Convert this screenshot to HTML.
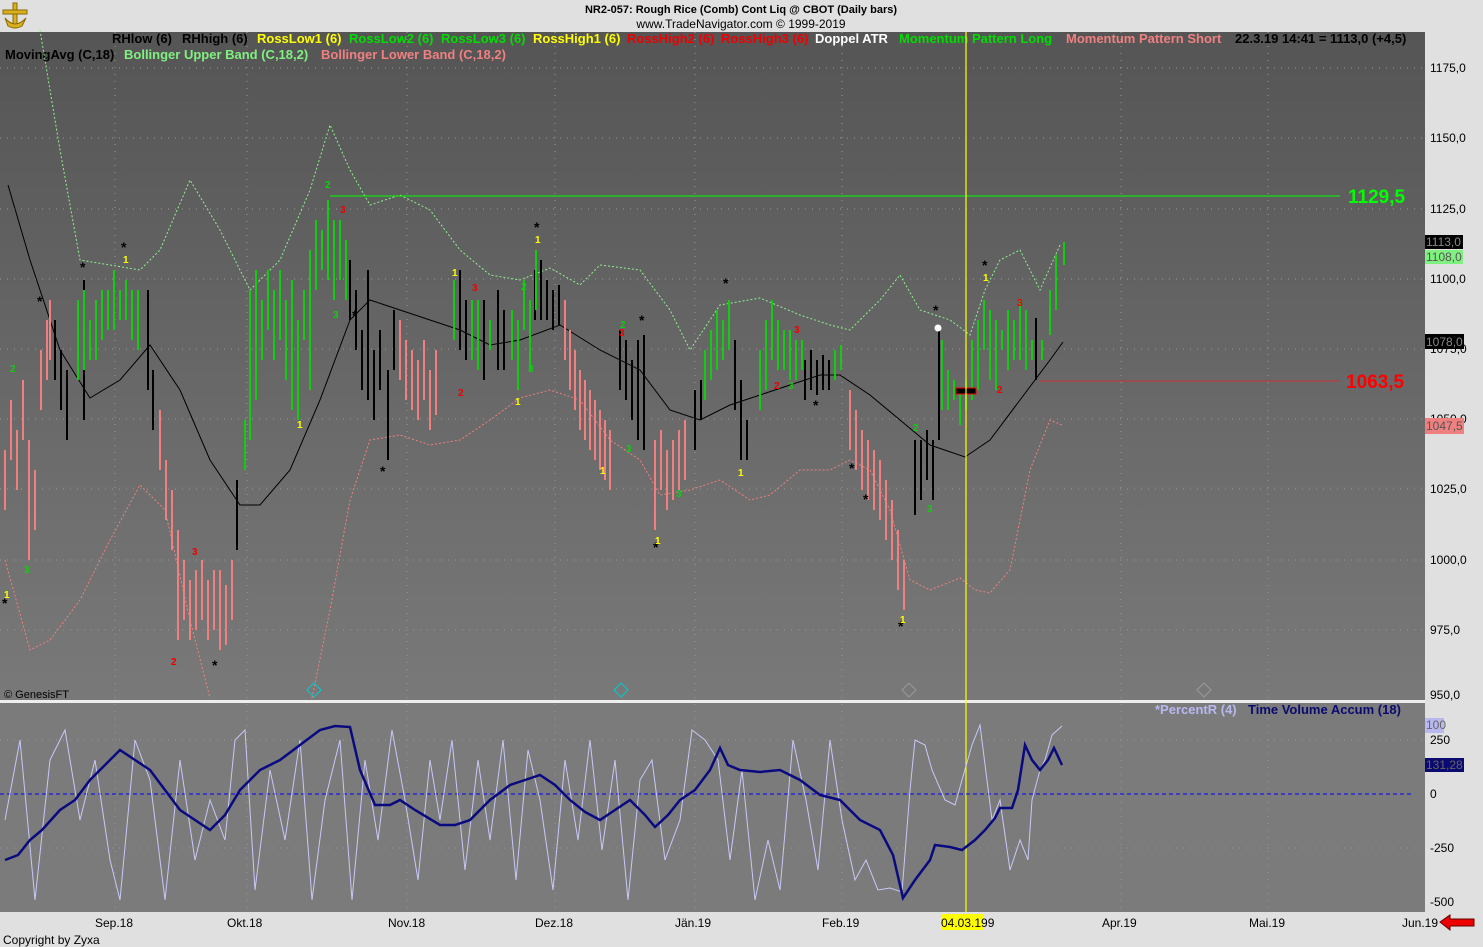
<!DOCTYPE html>
<html><head><meta charset="utf-8"><style>
body{margin:0;width:1483px;height:947px;overflow:hidden;background:#e0e0e0;font-family:"Liberation Sans",sans-serif}
svg{position:absolute;left:0;top:0}
text{font-family:"Liberation Sans",sans-serif}
</style></head><body>
<svg width="1483" height="947" viewBox="0 0 1483 947">
<defs><linearGradient id="g" x1="0" y1="0" x2="0" y2="1"><stop offset="0" stop-color="#555"/><stop offset="1" stop-color="#797979"/></linearGradient></defs>
<rect x="0" y="0" width="1483" height="947" fill="#e0e0e0"/>
<rect x="0" y="32" width="1425" height="668" fill="url(#g)"/>
<rect x="0" y="703" width="1425" height="209" fill="#7b7b7b"/>
<rect x="0" y="700" width="1425" height="3" fill="#eee"/>
<!-- grid -->
<g stroke="#999" stroke-dasharray="1,6" stroke-width="1">
<path d="M0 68H1425M0 138H1425M0 209H1425M0 279H1425M0 349H1425M0 419H1425M0 489H1425M0 560H1425M0 630H1425M0 740H1425M0 848H1425"/>
<path d="M115 32V912M247 32V912M407 32V912M555 32V912M695 32V912M842 32V912M1121 32V912M1268 32V912"/>
</g>
<!-- logo -->
<g fill="#d8b020" stroke="#8a6a00" stroke-width="1"><rect x="13" y="3" width="4" height="24"/><rect x="3" y="10" width="24" height="4"/><path d="M5 18Q15 30 26 18L22 26Q15 30 8 26Z"/></g>
<text x="741" y="13" font-size="11" font-weight="bold" text-anchor="middle">NR2-057:  Rough Rice (Comb) Cont Liq @ CBOT  (Daily bars)</text>
<text x="741" y="28" font-size="12" text-anchor="middle">www.TradeNavigator.com © 1999-2019</text>
<g font-size="13" font-weight="bold">
<text x="112" y="43" fill="#000">RHlow (6)</text><text x="182" y="43" fill="#000">RHhigh (6)</text>
<text x="257" y="43" fill="#ff0">RossLow1 (6)</text><text x="349" y="43" fill="#0d0">RossLow2 (6)</text>
<text x="441" y="43" fill="#0d0">RossLow3 (6)</text><text x="533" y="43" fill="#ff0">RossHigh1 (6)</text>
<text x="627" y="43" fill="#e00">RossHigh2 (6)</text><text x="721" y="43" fill="#e00">RossHigh3 (6)</text>
<text x="815" y="43" fill="#fff">Doppel ATR</text><text x="899" y="43" fill="#0d0">Momentum Pattern Long</text>
<text x="1066" y="43" fill="#f08080">Momentum Pattern Short</text><text x="1235" y="43" fill="#000">22.3.19 14:41 = 1113,0 (+4,5)</text>
<text x="5" y="59" fill="#000">MovingAvg (C,18)</text><text x="124" y="59" fill="#80f080">Bollinger Upper Band (C,18,2)</text>
<text x="321" y="59" fill="#f08080">Bollinger Lower Band (C,18,2)</text>
</g>
<!-- bands -->
<polyline fill="none" stroke="#90f090" stroke-dasharray="2,2" points="40,30 60,150 80,260 110,265 140,270 160,250 190,180 220,230 250,290 280,260 310,190 330,125 350,170 370,205 400,195 430,210 460,250 490,275 520,280 550,268 580,285 600,265 640,270 670,310 690,350 720,305 760,298 800,315 830,325 850,330 880,300 900,275 920,310 950,320 970,335 985,290 1000,260 1020,250 1040,290 1060,245"/>
<polyline fill="none" stroke="#f08080" stroke-dasharray="2,2" points="5,560 30,650 50,640 80,600 110,540 140,485 165,510 190,620 210,698"/>
<polyline fill="none" stroke="#f08080" stroke-dasharray="2,2" points="312,698 330,610 350,500 370,440 400,435 430,445 460,440 490,420 520,398 550,390 580,400 610,440 640,460 660,495 690,490 720,480 750,500 770,495 800,470 830,470 850,460 870,470 890,510 910,580 930,590 960,578 975,590 990,593 1010,570 1030,470 1050,420 1062,425"/>
<polyline fill="none" stroke="#000" points="8,185 30,260 60,350 90,398 120,380 150,345 180,390 210,460 240,505 260,505 290,470 320,400 350,320 370,300 400,310 430,320 460,330 490,345 520,340 560,325 600,350 640,370 670,410 700,420 730,405 760,395 790,385 820,375 840,375 870,395 900,420 930,445 965,457 990,440 1020,400 1050,360 1063,342"/>
<path d="M330 196H1340" stroke="#0f0"/><path d="M1040 381H1340" stroke="#c33"/>
<text x="1348" y="203" font-size="19" font-weight="bold" fill="#0f0">1129,5</text>
<text x="1346" y="388" font-size="19" font-weight="bold" fill="#f00">1063,5</text>
<!-- bars -->
<g stroke-width="2" fill="none">
<path stroke="#f08080" d="M5 450V510M11 400V460M17 430V490M23 380V440M29 440V560M35 470V530M41 350V410M47 320V380M50 300V360M160 410V470M166 460V520M172 490V550M178 530V640M184 560V620M190 580V640M196 570V630M202 560V620M208 580V640M214 570V630M220 570V650M226 585V645M232 560V620M400 320V380M406 340V400M412 350V410M418 360V420M424 340V400M430 370V430M436 350V415M565 300V360M570 330V390M575 350V410M580 370V430M585 380V440M590 390V450M595 400V460M600 410V470M605 420V480M610 430V490M655 440V530M661 430V490M667 450V510M673 440V500M679 430V490M685 420V480M850 390V450M856 410V470M862 430V490M868 440V500M874 450V510M880 460V520M886 480V540M892 500V560M898 530V590M904 560V610"/>
<path stroke="#000" d="M55 320V380M61 350V410M67 370V440M84 280V420M148 290V390M153 370V430M237 480V550M350 260V320M356 290V350M362 330V390M368 270V400M374 350V420M380 330V390M388 370V460M394 310V370M460 270V350M466 300V360M484 300V380M498 290V370M504 310V370M535 270V320M541 260V320M547 280V320M553 290V330M559 285V325M620 330V390M626 340V400M632 360V420M638 340V440M644 335V450M695 390V450M701 380V420M735 340V410M741 380V460M747 420V460M805 360V400M811 350V390M817 360V395M823 355V390M829 360V390M915 440V515M921 440V500M927 430V480M933 440V500M939 330V440M1036 318V380"/>
<path stroke="#1c1" d="M78 300V380M84 290V370M90 320V360M96 300V360M102 290V340M108 290V330M114 270V330M120 290V320M126 280V320M132 290V340M138 290V350M245 420V470M250 290V440M256 270V400M262 300V360M268 270V330M274 290V360M280 270V340M286 300V380M292 280V410M298 320V420M304 290V340M310 250V390M316 220V290M322 230V270M328 200V280M334 220V300M340 220V280M346 240V300M454 280V340M472 300V360M478 300V370M490 320V350M512 310V360M518 320V390M524 280V330M530 300V370M536 250V310M705 350V400M711 330V380M717 310V370M723 320V360M729 300V350M760 350V410M766 320V390M772 300V360M778 320V370M784 330V370M790 330V380M796 340V380M802 340V370M835 350V380M841 345V370M942 340V410M948 370V410M954 380V400M960 390V425M966 380V410M972 340V400M978 320V390M984 300V350M990 310V380M996 320V390M1002 330V350M1008 310V370M1014 320V360M1020 300V360M1026 310V370M1032 340V360M1042 340V360M1050 290V335M1056 255V310M1064 242V265"/>
</g>
<rect x="956" y="388" width="20" height="6" fill="#000" stroke="#e00"/>
<circle cx="938" cy="328" r="3.5" fill="#fff"/>
<g font-size="14" font-weight="bold" fill="#000">
<text x="2" y="608">*</text><text x="37" y="306">*</text><text x="80" y="272">*</text><text x="121" y="252">*</text><text x="212" y="670">*</text><text x="352" y="320">*</text><text x="380" y="476">*</text><text x="534" y="232">*</text><text x="639" y="325">*</text><text x="653" y="552">*</text><text x="723" y="288">*</text><text x="813" y="410">*</text><text x="849" y="473">*</text><text x="863" y="504">*</text><text x="898" y="631">*</text><text x="933" y="315">*</text><text x="982" y="270">*</text>
</g>
<g font-size="10" font-weight="bold">
<text x="10" y="372" fill="#1c1">2</text><text x="24" y="573" fill="#1c1">3</text><text x="4" y="598" fill="#ff0">1</text><text x="123" y="263" fill="#ff0">1</text><text x="171" y="665" fill="#e00">2</text><text x="192" y="555" fill="#e00">3</text><text x="297" y="428" fill="#ff0">1</text><text x="325" y="188" fill="#1c1">2</text><text x="340" y="213" fill="#e00">3</text><text x="333" y="318" fill="#1c1">3</text><text x="452" y="276" fill="#ff0">1</text><text x="472" y="291" fill="#e00">3</text><text x="458" y="396" fill="#e00">2</text><text x="515" y="405" fill="#ff0">1</text><text x="521" y="290" fill="#1c1">2</text><text x="528" y="372" fill="#1c1">3</text><text x="535" y="243" fill="#ff0">1</text><text x="620" y="328" fill="#1c1">2</text><text x="619" y="336" fill="#e00">3</text><text x="600" y="474" fill="#ff0">1</text><text x="626" y="452" fill="#1c1">3</text><text x="655" y="544" fill="#ff0">1</text><text x="676" y="497" fill="#1c1">3</text><text x="738" y="476" fill="#ff0">1</text><text x="774" y="389" fill="#e00">2</text><text x="794" y="333" fill="#e00">3</text><text x="788" y="389" fill="#1c1">3</text><text x="913" y="431" fill="#1c1">2</text><text x="927" y="512" fill="#1c1">3</text><text x="900" y="623" fill="#ff0">1</text><text x="983" y="281" fill="#ff0">1</text><text x="997" y="393" fill="#e00">2</text><text x="1017" y="306" fill="#e00">3</text>
</g>
<path d="M966 32V912" stroke="#ff0" stroke-width="1.2"/>
<text x="4" y="698" font-size="11" fill="#000">© GenesisFT</text>
<g fill="none" stroke="#0cc"><path d="M314 683l7 7-7 7-7-7z"/><path d="M621 683l7 7-7 7-7-7z"/></g>
<g fill="none" stroke="#999"><path d="M909 683l7 7-7 7-7-7z"/><path d="M1204 683l7 7-7 7-7-7z"/></g>
<!-- lower panel -->
<text x="1155" y="714" font-size="13" font-weight="bold" fill="#b8b8f0">*PercentR (4)</text>
<text x="1248" y="714" font-size="13" font-weight="bold" fill="#0a0a70">Time Volume Accum (18)</text>
<path d="M0 794H1412" stroke="#00f" stroke-dasharray="4,3"/>
<polyline fill="none" stroke="#c8c8f8" points="5,820 20,740 35,900 50,760 65,730 80,820 95,760 110,860 120,900 135,740 150,780 165,900 180,760 195,860 210,800 225,840 235,740 245,730 255,890 270,770 285,840 300,740 312,900 325,800 340,740 352,900 365,760 378,840 392,730 405,800 418,880 430,760 440,820 452,740 465,870 478,760 490,840 503,740 516,880 528,750 540,800 553,890 565,760 578,840 590,740 602,850 615,760 628,900 640,780 652,760 665,860 680,820 692,730 705,740 718,760 730,860 742,770 755,900 768,840 780,890 793,740 806,800 818,870 830,740 842,820 855,880 866,860 878,890 890,888 902,892 910,790 915,740 925,745 932,770 945,800 955,805 962,780 972,745 980,725 992,820 1000,800 1010,870 1020,840 1028,860 1032,800 1040,770 1045,760 1052,735 1062,726"/>
<polyline fill="none" stroke="#0a0a80" stroke-width="2.5" points="5,860 18,855 30,840 42,830 60,810 75,800 90,780 105,765 120,750 135,760 150,770 165,790 180,810 195,820 210,830 225,815 240,790 260,770 280,760 300,745 320,730 335,726 350,727 360,770 375,805 390,805 400,800 415,810 440,825 455,825 470,820 490,800 510,785 525,780 540,775 555,785 570,800 585,812 600,820 615,810 630,800 645,815 655,827 668,815 680,800 695,790 710,770 720,748 728,765 740,770 760,772 780,770 800,780 820,795 840,800 860,820 880,830 893,855 903,898 915,880 930,860 935,845 950,847 962,850 975,840 985,830 995,818 1000,808 1012,808 1018,790 1025,745 1032,760 1040,770 1048,760 1054,748 1062,765"/>
<!-- axis -->
<g font-size="12" fill="#000">
<text x="1430" y="72">1175,0</text><text x="1430" y="142">1150,0</text><text x="1430" y="213">1125,0</text><text x="1430" y="283">1100,0</text><text x="1430" y="353">1075,0</text><text x="1430" y="423">1050,0</text><text x="1430" y="493">1025,0</text><text x="1430" y="564">1000,0</text><text x="1430" y="634">975,0</text><text x="1430" y="699">950,0</text>
<text x="1430" y="744">250</text><text x="1430" y="798">0</text><text x="1430" y="852">-250</text><text x="1430" y="906">-500</text>
</g>
<rect x="1425" y="235" width="38" height="14" fill="#000"/><text x="1426" y="246" font-size="12" fill="#888">1113,0</text>
<rect x="1425" y="250" width="38" height="14" fill="#80f080"/><text x="1426" y="261" font-size="12" fill="#555">1108,0</text>
<rect x="1425" y="334" width="39" height="15" fill="#000"/><text x="1426" y="346" font-size="12" fill="#888">1078,0</text>
<rect x="1425" y="418" width="39" height="16" fill="#f08080"/><text x="1426" y="430" font-size="12" fill="#555">1047,5</text>
<rect x="1425" y="718" width="19" height="15" fill="#b8b8f0"/><text x="1426" y="729" font-size="12" fill="#666">100</text>
<rect x="1425" y="758" width="39" height="14" fill="#0a0a70"/><text x="1426" y="769" font-size="12" fill="#666">131,28</text>
<g font-size="12" fill="#000">
<text x="95" y="927">Sep.18</text><text x="227" y="927">Okt.18</text><text x="388" y="927">Nov.18</text><text x="535" y="927">Dez.18</text><text x="675" y="927">Jän.19</text><text x="822" y="927">Feb.19</text>
<rect x="941" y="914" width="43" height="16" fill="#ff0"/><text x="941" y="927">04.03.199</text>
<text x="1102" y="927">Apr.19</text><text x="1249" y="927">Mai.19</text><text x="1402" y="927">Jun.19</text>
<text x="3" y="944">Copyright by Zyxa</text>
</g>
<path d="M1440 922l10-7v4h24v7h-24v4z" fill="#e00" stroke="#600"/>
</svg>
</body></html>
